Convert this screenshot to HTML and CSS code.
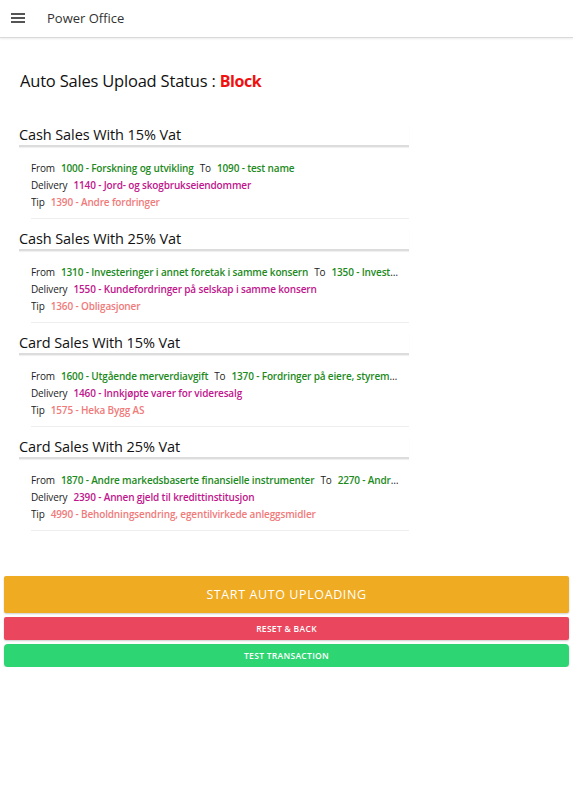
FILE: index.html
```html
<!DOCTYPE html>
<html>
<head>
<meta charset="utf-8">
<link rel="stylesheet" href="styles.css">
</head>
<body>
<header class="topbar">
  <span class="menu-icon">
    <svg width="14" height="10" viewBox="0 0 14 10"><rect x="0" y="0" width="14" height="2" fill="#555"/><rect x="0" y="4" width="14" height="2" fill="#555"/><rect x="0" y="8" width="14" height="2" fill="#555"/></svg>
  </span>
  <span class="app-title">Power Office</span>
</header>

<main class="content">
  <h1 class="status">Auto Sales Upload Status : <span class="status-value">Block</span></h1>

  <section class="group">
    <h2 class="group-title">Cash Sales With 15% Vat</h2>
    <div class="group-body">
      <div class="row"><span class="lbl">From</span><span class="acc green">1000 - Forskning og utvikling</span><span class="lbl">To</span><span class="acc green">1090 - test name</span></div>
      <div class="row"><span class="lbl">Delivery</span><span class="acc magenta">1140 - Jord- og skogbrukseiendommer</span></div>
      <div class="row"><span class="lbl">Tip</span><span class="acc salmon">1390 - Andre fordringer</span></div>
    </div>
  </section>

  <section class="group">
    <h2 class="group-title">Cash Sales With 25% Vat</h2>
    <div class="group-body">
      <div class="row"><span class="lbl">From</span><span class="acc green">1310 - Investeringer i annet foretak i samme konsern</span><span class="lbl">To</span><span class="acc green">1350 - Investeringer i aksjer, andeler og verdipapirfondsandeler i andre foretak</span></div>
      <div class="row"><span class="lbl">Delivery</span><span class="acc magenta">1550 - Kundefordringer på selskap i samme konsern</span></div>
      <div class="row"><span class="lbl">Tip</span><span class="acc salmon">1360 - Obligasjoner</span></div>
    </div>
  </section>

  <section class="group">
    <h2 class="group-title">Card Sales With 15% Vat</h2>
    <div class="group-body">
      <div class="row"><span class="lbl">From</span><span class="acc green">1600 - Utgående merverdiavgift</span><span class="lbl">To</span><span class="acc green">1370 - Fordringer på eiere, styremedlemmer o.l.</span></div>
      <div class="row"><span class="lbl">Delivery</span><span class="acc magenta">1460 - Innkjøpte varer for videresalg</span></div>
      <div class="row"><span class="lbl">Tip</span><span class="acc salmon">1575 - Heka Bygg AS</span></div>
    </div>
  </section>

  <section class="group">
    <h2 class="group-title">Card Sales With 25% Vat</h2>
    <div class="group-body">
      <div class="row"><span class="lbl">From</span><span class="acc green">1870 - Andre markedsbaserte finansielle instrumenter</span><span class="lbl">To</span><span class="acc green">2270 - Andre avsetninger for forpliktelser</span></div>
      <div class="row"><span class="lbl">Delivery</span><span class="acc magenta">2390 - Annen gjeld til kredittinstitusjon</span></div>
      <div class="row"><span class="lbl">Tip</span><span class="acc salmon">4990 - Beholdningsendring, egentilvirkede anleggsmidler</span></div>
    </div>
  </section>
</main>

<div class="actions">
  <button class="btn btn-start">START AUTO UPLOADING</button>
  <button class="btn btn-small btn-reset">RESET &amp; BACK</button>
  <button class="btn btn-small btn-test">TEST TRANSACTION</button>
</div>
</body>
</html>
```

FILE: styles.css
```css
* { box-sizing: border-box; }
body {
  margin: 0;
  background: #fff;
  font-family: "Open Sans", "Noto Sans", sans-serif;
  color: #222;
}
.topbar {
  height: 38px;
  display: flex;
  align-items: center;
  border-bottom: 1px solid #d9d9d9;
  box-shadow: 0 1px 2px rgba(0,0,0,0.08);
}
.menu-icon {
  display: flex;
  margin-left: 11px;
  margin-top: -2px;
}
.app-title {
  margin-left: 22px;
  font-size: 13px;
  color: #333;
  margin-top: -2px;
}
.content {
  padding: 31px 0 0 19px;
  width: 409px;
}
.status {
  margin: 0 0 0 1px;
  font-size: 16.5px;
  line-height: 24px;
  font-weight: 400;
  color: #111;
  letter-spacing: -0.2px;
}
.status-value {
  color: #f01010;
  font-weight: 700;
  font-size: 16px;
  letter-spacing: -0.4px;
}
.group {
  margin-top: 32px;
}
.group + .group {
  margin-top: 10px;
}
.group-title {
  margin: 0;
  font-size: 14.5px;
  line-height: 20px;
  font-weight: 400;
  color: #111;
  border-bottom: 2px solid #dcdcdc;
  box-shadow: 0 1px 1px rgba(0,0,0,0.06);
  letter-spacing: -0.1px;
}
.group-body {
  margin-left: 12px;
  padding: 13px 10px 7px 0;
  border-bottom: 1px solid #eeeeee;
}
.row {
  font-size: 10px;
  line-height: 17px;
  white-space: nowrap;
  overflow: hidden;
  text-overflow: ellipsis;
  letter-spacing: -0.15px;
}
.lbl {
  color: #222;
  margin-right: 6px;
}
.acc {
  font-weight: 600;
  margin-right: 6px;
}
.green { color: #1c8a1c; }
.magenta { color: #c0158c; }
.salmon { color: #f07a7a; }
.actions {
  margin-top: 45px;
  padding: 0 4px;
  display: flex;
  flex-direction: column;
  gap: 4px;
}
.btn {
  border: none;
  color: #fff;
  font-family: "Open Sans", "Noto Sans", sans-serif;
  width: 100%;
  border-radius: 2px;
  box-shadow: 0 1px 2px rgba(0,0,0,0.2);
  padding: 0;
}
.btn-start {
  height: 37px;
  background: #efab22;
  font-size: 12.5px;
  letter-spacing: 0.6px;
  font-weight: 500;
}
.btn-small {
  height: 23px;
  font-size: 8.5px;
  font-weight: 600;
  letter-spacing: 0.3px;
}
.btn-reset { background: #ea465e; }
.btn-test { background: #2ed573; border-radius: 4px; }
```
